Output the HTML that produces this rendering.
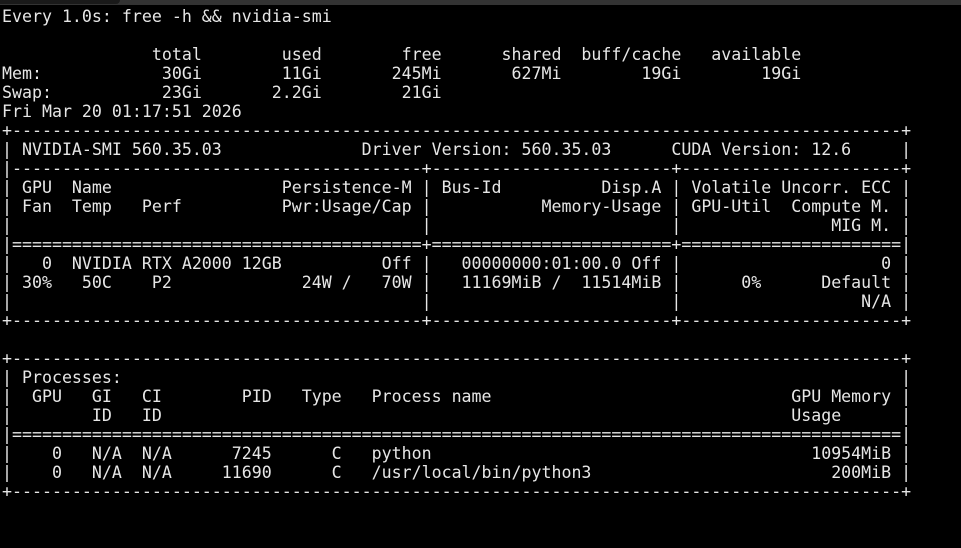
<!DOCTYPE html>
<html><head><meta charset="utf-8"><style>
html,body{margin:0;padding:0;background:#000;width:961px;height:548px;overflow:hidden}
.bar{position:absolute;left:0;top:0;width:961px;height:5px;background:#333}
.tab{position:absolute;left:0;top:0;width:120px;height:4px;background:#1a1a1a;border-bottom-right-radius:4px}
pre{position:absolute;left:2px;top:7px;margin:0;font-family:"DejaVu Sans Mono","Liberation Mono",monospace;font-size:16.6px;line-height:19px;color:#e6e6e6;letter-spacing:0}
</style></head><body>
<div class="bar"></div><div class="tab"></div>
<pre>Every 1.0s: free -h &amp;&amp; nvidia-smi

               total        used        free      shared  buff/cache   available
Mem:            30Gi        11Gi       245Mi       627Mi        19Gi        19Gi
Swap:           23Gi       2.2Gi        21Gi
Fri Mar 20 01:17:51 2026
+-----------------------------------------------------------------------------------------+
| NVIDIA-SMI 560.35.03              Driver Version: 560.35.03      CUDA Version: 12.6     |
|-----------------------------------------+------------------------+----------------------+
| GPU  Name                 Persistence-M | Bus-Id          Disp.A | Volatile Uncorr. ECC |
| Fan  Temp   Perf          Pwr:Usage/Cap |           Memory-Usage | GPU-Util  Compute M. |
|                                         |                        |               MIG M. |
|=========================================+========================+======================|
|   0  NVIDIA RTX A2000 12GB          Off |   00000000:01:00.0 Off |                    0 |
| 30%   50C    P2             24W /   70W |   11169MiB /  11514MiB |      0%      Default |
|                                         |                        |                  N/A |
+-----------------------------------------+------------------------+----------------------+

+-----------------------------------------------------------------------------------------+
| Processes:                                                                              |
|  GPU   GI   CI        PID   Type   Process name                              GPU Memory |
|        ID   ID                                                               Usage      |
|=========================================================================================|
|    0   N/A  N/A      7245      C   python                                      10954MiB |
|    0   N/A  N/A     11690      C   /usr/local/bin/python3                        200MiB |
+-----------------------------------------------------------------------------------------+</pre>
</body></html>
